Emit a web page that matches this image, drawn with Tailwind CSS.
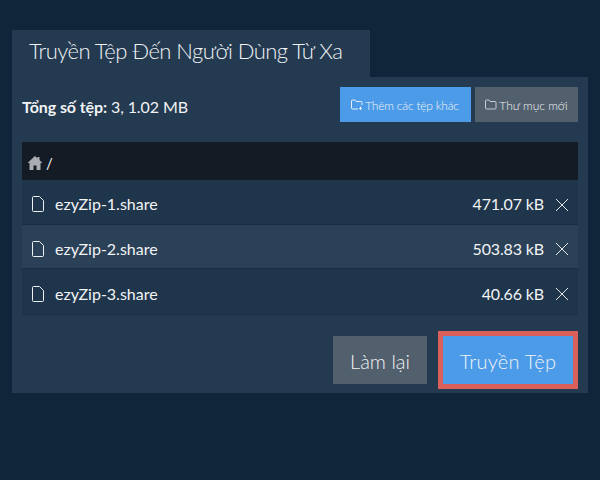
<html lang="vi">
<head>
    <meta charset="UTF-8">
    <title>Truyền Tệp</title>
    <script src="https://cdn.jsdelivr.net/npm/@tailwindcss/browser@4"></script>
</head>
<body class="bg-[#10253a] h-[480px] overflow-hidden font-['Lato','Noto_Sans',sans-serif] text-[#f1f3f5]">
    <div class="pt-[30px] px-3">
        <div class="w-[358px] h-[47px] bg-[#233a50] pl-[17px] pt-[6px] text-[22px] leading-[30px] font-light tracking-[-0.55px]">Truyền Tệp Đến Người Dùng Từ Xa</div>
        <div class="bg-[#233a50] h-[316px] px-[10px] pt-[10px]">
            <div class="flex items-center h-[35px]">
                <div class="text-[16px] pt-[5px] tracking-[-0.1px]"><b class="font-bold">Tổng số tệp:</b> 3, 1.02 MB</div>
                <div class="flex ml-auto gap-[4px]">
                    <button class="w-[131px] h-[35px] bg-[#4b9be8] text-[12px] font-light tracking-[-0.2px] flex items-center justify-center gap-[2px] pr-[1px]">
                        <svg class="w-3 h-3" viewBox="0 0 12 12" fill="none" stroke="#e4edf6" stroke-width="1"><path d="M.5 9V2q0-1 1-1h2.500l1 1.500h5q1 0 1 1V6M.5 9q0 1 1 1H7M9.500 7.500v3.500M8 9.500h3"/></svg>
                        <span class="pt-[2px]">Thêm các tệp khác</span>
                    </button>
                    <button class="w-[103px] h-[35px] bg-[#525f6d] text-[12px] font-light flex items-center justify-center gap-[2px]">
                        <svg class="w-3 h-3" viewBox="0 0 12 12" fill="none" stroke="#c6ccd2" stroke-width="1"><path d="M.5 9V2q0-1 1-1h2.500l1 1.500h5q1 0 1 1V9q0 1-1 1h-8.500q-1 0-1-1z"/></svg>
                        <span class="pt-[2px]">Thư mục mới</span>
                    </button>
                </div>
            </div>
            <div class="mt-[20px] h-[38px] bg-[#141b24] flex items-center pl-[6px] gap-[3px] text-[15px]">
                <svg class="w-[14px] h-[14px] mt-[4px]" viewBox="0 0 14 14" fill="#a9adb2"><path d="M7 0 0 6.500V7h1.500v7h4V9.500h3V14h4V7H14v-.5L11.500 4V1h-2v1.200z"/></svg>
                <span class="pt-[4px] ml-[1px]">/</span>
            </div>
            <div class="flex items-center h-[45px] bg-[#1f354b] border-b border-[#1b2f43] pl-[10px] pr-[10px] text-[16px]">
                <svg class="w-[12px] h-[16px] mt-[4px]" viewBox="0 0 12 16" fill="none" stroke="#eef1f4" stroke-width="1"><path d="M1.500.5h6l4 4v10q0 1-1 1h-9q-1 0-1-1v-13q0-1 1-1z"/></svg>
                <span class="ml-[11px] pt-[4px]">ezyZip-1.share</span>
                <span class="ml-auto pt-[4px] tracking-[-0.15px]">471.07 kB</span>
                <svg class="w-3 h-3 ml-[12px] mt-[5px]" viewBox="0 0 12 12" stroke="#e4e7ea" stroke-width="1"><path d="M0 0l12 12M12 0 0 12"/></svg>
            </div>
            <div class="flex items-center h-[44px] bg-[#2b4157] border-b border-[#1b2f43] pl-[10px] pr-[10px] text-[16px]">
                <svg class="w-[12px] h-[16px] mt-[4px]" viewBox="0 0 12 16" fill="none" stroke="#eef1f4" stroke-width="1"><path d="M1.500.5h6l4 4v10q0 1-1 1h-9q-1 0-1-1v-13q0-1 1-1z"/></svg>
                <span class="ml-[11px] pt-[4px]">ezyZip-2.share</span>
                <span class="ml-auto pt-[4px] tracking-[-0.15px]">503.83 kB</span>
                <svg class="w-3 h-3 ml-[12px] mt-[5px]" viewBox="0 0 12 12" stroke="#e4e7ea" stroke-width="1"><path d="M0 0l12 12M12 0 0 12"/></svg>
            </div>
            <div class="flex items-center h-[46px] bg-[#1f354b] border-b border-[#1b2f43] pl-[10px] pr-[10px] text-[16px]">
                <svg class="w-[12px] h-[16px] mt-[4px]" viewBox="0 0 12 16" fill="none" stroke="#eef1f4" stroke-width="1"><path d="M1.500.5h6l4 4v10q0 1-1 1h-9q-1 0-1-1v-13q0-1 1-1z"/></svg>
                <span class="ml-[11px] pt-[4px]">ezyZip-3.share</span>
                <span class="ml-auto pt-[4px] tracking-[-0.15px]">40.66 kB</span>
                <svg class="w-3 h-3 ml-[12px] mt-[5px]" viewBox="0 0 12 12" stroke="#e4e7ea" stroke-width="1"><path d="M0 0l12 12M12 0 0 12"/></svg>
            </div>
            <div class="flex justify-end items-center mt-[16px] gap-[11px]">
                <button class="w-[94px] h-[48px] bg-[#525f6d] text-[20px] font-light pt-[1px]">Làm lại</button>
                <div class="border-[5px] border-[#d95f5b]">
                    <button class="block w-[130px] h-[48px] bg-[#4b9be8] text-[20px] font-light tracking-[0.25px] pt-[1px]">Truyền Tệp</button>
                </div>
            </div>
        </div>
    </div>
</body>
</html>
